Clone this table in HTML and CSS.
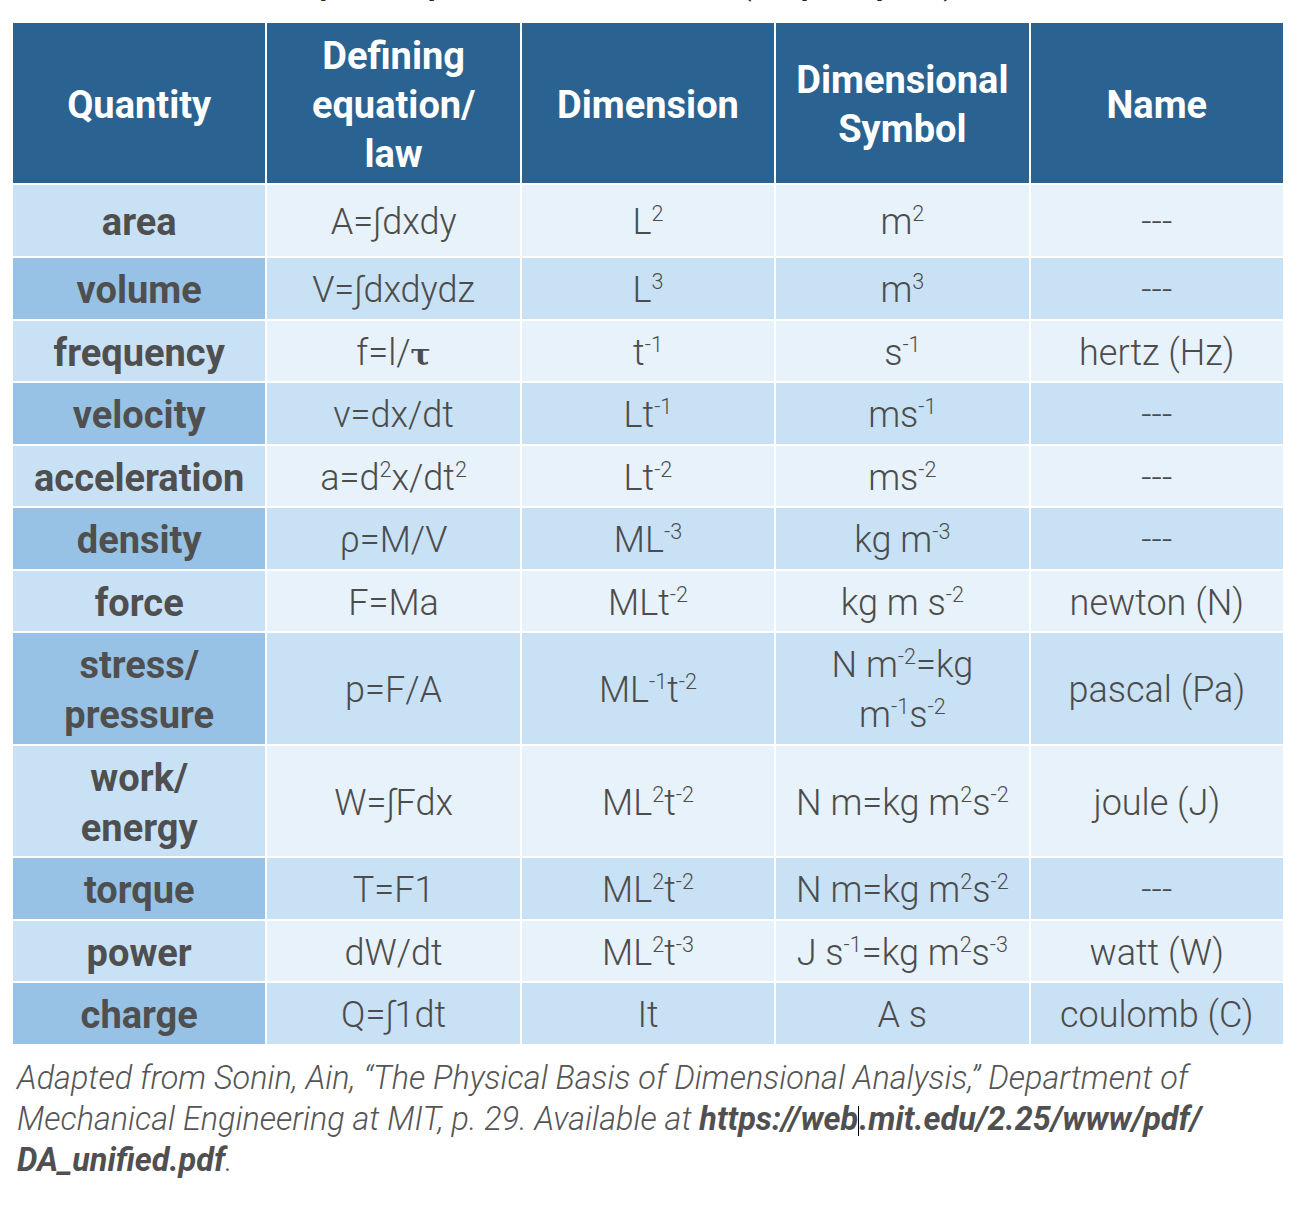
FILE: index.html
```html
<!DOCTYPE html>
<html lang="en">
<head>
<meta charset="utf-8">
<title>Dimensional quantities</title>
<link rel="stylesheet" href="styles.css">
</head>
<body>
<div class="page">
  <div class="cut-title"><span>Table 1. Examples of quantities, with SI units (adapted, p. 29)</span></div>
  <table class="dims">
    <thead>
      <tr>
        <th>Quantity</th>
        <th>Defining<br>equation/<br>law</th>
        <th>Dimension</th>
        <th>Dimensional<br>Symbol</th>
        <th>Name</th>
      </tr>
    </thead>
    <tbody>
      <tr class="light tall">
        <td class="q">area</td><td>A=∫dxdy</td><td>L<sup>2</sup></td><td>m<sup>2</sup></td><td>---</td>
      </tr>
      <tr class="dark">
        <td class="q">volume</td><td>V=∫dxdydz</td><td>L<sup>3</sup></td><td>m<sup>3</sup></td><td>---</td>
      </tr>
      <tr class="light">
        <td class="q">frequency</td><td>f=l/<span class="tau">τ</span></td><td>t<sup>-1</sup></td><td>s<sup>-1</sup></td><td>hertz (Hz)</td>
      </tr>
      <tr class="dark">
        <td class="q">velocity</td><td>v=dx/dt</td><td>Lt<sup>-1</sup></td><td>ms<sup>-1</sup></td><td>---</td>
      </tr>
      <tr class="light">
        <td class="q">acceleration</td><td>a=d<sup>2</sup>x/dt<sup>2</sup></td><td>Lt<sup>-2</sup></td><td>ms<sup>-2</sup></td><td>---</td>
      </tr>
      <tr class="dark">
        <td class="q">density</td><td>ρ=M/V</td><td>ML<sup>-3</sup></td><td>kg m<sup>-3</sup></td><td>---</td>
      </tr>
      <tr class="light">
        <td class="q">force</td><td>F=Ma</td><td>MLt<sup>-2</sup></td><td>kg m s<sup>-2</sup></td><td>newton (N)</td>
      </tr>
      <tr class="dark">
        <td class="q">stress/<br>pressure</td><td>p=F/A</td><td>ML<sup>-1</sup>t<sup>-2</sup></td><td>N m<sup>-2</sup>=kg<br>m<sup>-1</sup>s<sup>-2</sup></td><td>pascal (Pa)</td>
      </tr>
      <tr class="light">
        <td class="q">work/<br>energy</td><td>W=∫Fdx</td><td>ML<sup>2</sup>t<sup>-2</sup></td><td>N m=kg m<sup>2</sup>s<sup>-2</sup></td><td>joule (J)</td>
      </tr>
      <tr class="dark">
        <td class="q">torque</td><td>T=F1</td><td>ML<sup>2</sup>t<sup>-2</sup></td><td>N m=kg m<sup>2</sup>s<sup>-2</sup></td><td>---</td>
      </tr>
      <tr class="light">
        <td class="q">power</td><td>dW/dt</td><td>ML<sup>2</sup>t<sup>-3</sup></td><td>J s<sup>-1</sup>=kg m<sup>2</sup>s<sup>-3</sup></td><td>watt (W)</td>
      </tr>
      <tr class="dark">
        <td class="q">charge</td><td>Q=∫1dt</td><td>It</td><td>A s</td><td>coulomb (C)</td>
      </tr>
    </tbody>
  </table>
  <p class="source">Adapted from Sonin, Ain, “The Physical Basis of Dimensional Analysis,” Department of Mechanical Engineering at MIT, p. 29. Available at <b>https://web<span class="caret"></span>.mit.edu/2.25/www/pdf/<br>DA_unified.pdf</b>.</p>
</div>
</body>
</html>
```

FILE: styles.css
```css
html, body {
  margin: 0;
  padding: 0;
  background: #ffffff;
}

.page {
  font-family: Roboto, "Liberation Sans", sans-serif;
  color: #505050;
  padding: 0 0 0 11px;
}

.cut-title {
  height: 8px;
  overflow: hidden;
  display: flex;
  align-items: flex-end;
  padding-left: 120px;
}

.cut-title span {
  font-size: 30px;
  font-weight: 700;
  line-height: 30px;
  color: #222;
  white-space: nowrap;
  margin-bottom: 8px;
}

.dims {
  border-collapse: separate;
  border-spacing: 2px;
  width: 1274px;
  table-layout: fixed;
  margin-top: 13px;
}

.dims th {
  background: #2a6391;
  color: #ffffff;
  font-weight: 700;
  font-size: 38px;
  line-height: 49px;
  height: 160px;
  padding: 4px 4px 0;
  text-align: center;
  vertical-align: middle;
  box-sizing: border-box;
}

.dims td {
  font-weight: 300;
  font-size: 36px;
  line-height: 50px;
  text-align: center;
  vertical-align: middle;
  padding: 7px 4px 3.5px;
  color: #4c4c4c;
  white-space: nowrap;
}

.dims td.q {
  font-weight: 700;
  color: #4f4f4f;
  font-size: 38px;
}

.dims tr.light td { background: #e7f2fa; }
.dims tr.dark td { background: #c9e1f4; }
.dims tr.light td.q { background: #c9e1f4; }
.dims tr.dark td.q { background: #97c2e5; }

.dims tr.tall td { height: 71px; box-sizing: border-box; }

.dims sup {
  font-size: 60%;
  line-height: 0;
  vertical-align: 0.6em;
}

.tau {
  font-family: "DejaVu Serif", serif;
  font-weight: 700;
  font-size: 30px;
  line-height: 0;
}

.source {
  margin: 12px 0 0 6px;
  font-style: italic;
  font-weight: 300;
  font-size: 32.4px;
  line-height: 41px;
  color: #555555;
  width: 1270px;
}

.source b {
  font-weight: 700;
  color: #505050;
}

.caret {
  display: inline-block;
  width: 0;
  height: 30px;
  border-left: 1px solid #000;
  vertical-align: -6px;
}
```
